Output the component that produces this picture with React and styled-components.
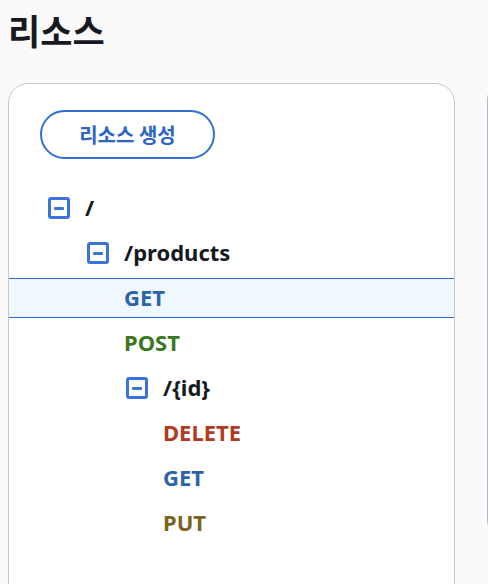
import React from "react";
import styled, { createGlobalStyle } from "styled-components";

const GlobalStyle = createGlobalStyle`
  html, body {
    margin: 0;
    padding: 0;
    background: #fafafa;
    overflow: hidden;
  }
  body {
    font-family: "Noto Sans", "Noto Sans CJK KR", sans-serif;
    color: #16191f;
  }
`;

const Page = styled.div`
  padding: 8px 0 0 8px;
  width: 800px;
`;

const Title = styled.h1`
  margin: 0;
  font-family: "Noto Sans CJK KR", "Noto Sans", sans-serif;
  font-size: 35px;
  font-weight: 700;
  line-height: 44px;
  color: #16191f;
`;

const Columns = styled.div`
  display: flex;
  align-items: flex-start;
  gap: 32px;
  margin-top: 31px;
`;

const Panel = styled.section`
  width: 445px;
  min-height: 560px;
  background: #fff;
  border: 1px solid #c6c6cd;
  border-radius: 20px;
  padding: 26px 0 0;
`;

const SidePanel = styled.div`
  width: 300px;
  height: 452px;
  background: #fafafa;
  border: 1px solid #b8b8be;
  border-radius: 16px;
`;

const Toolbar = styled.div`
  padding: 0 31px;
`;

const CreateButton = styled.button`
  width: 175px;
  height: 49px;
  border: 2.5px solid #2f6fd6;
  border-radius: 25px;
  background: #fff;
  color: #2d64c6;
  font-family: "Noto Sans CJK KR", "Noto Sans", sans-serif;
  font-size: 20px;
  font-weight: 700;
  cursor: pointer;
`;

const Tree = styled.ul`
  list-style: none;
  margin: 29px 0 0;
  padding: 0;
  display: flex;
  flex-direction: column;
  gap: 5px;
`;

const Row = styled.li`
  height: 40px;
  box-sizing: border-box;
  display: flex;
  align-items: center;
  gap: 15px;
  padding-left: ${(p) => 39 + p.$level * 39}px;
  background: ${(p) => (p.$selected ? "#f0f8ff" : "transparent")};
  border-top: 1px solid ${(p) => (p.$selected ? "#2f6fd6" : "transparent")};
  border-bottom: 1px solid ${(p) => (p.$selected ? "#2f6fd6" : "transparent")};
`;

const Toggle = styled.span`
  width: 22px;
  height: 22px;
  flex: none;
  box-sizing: border-box;
  border: 3px solid #3a74dc;
  border-radius: 3px;
  display: flex;
  align-items: center;
  justify-content: center;

  &::after {
    content: "";
    width: 10px;
    height: 3px;
    background: #3a74dc;
    border-radius: 1px;
  }
`;

const Spacer = styled.span`
  width: 22px;
  flex: none;
`;

const methodColors = {
  GET: "#2b64a8",
  POST: "#3a771f",
  DELETE: "#b23a22",
  PUT: "#7a6420",
};

const Label = styled.span`
  font-size: 22px;
  font-weight: 700;
  line-height: 1;
  margin-top: -2px;
  color: ${(p) => (p.$method ? methodColors[p.$method] : "#16191f")};
`;

const items = [
  { type: "resource", level: 0, label: "/" },
  { type: "resource", level: 1, label: "/products" },
  { type: "method", level: 1, label: "GET", selected: true },
  { type: "method", level: 1, label: "POST" },
  { type: "resource", level: 2, label: "/{id}" },
  { type: "method", level: 2, label: "DELETE" },
  { type: "method", level: 2, label: "GET" },
  { type: "method", level: 2, label: "PUT" },
];

export default function App() {
  return (
    <Page>
      <GlobalStyle />
      <Title>리소스</Title>
      <Columns>
        <Panel>
          <Toolbar>
            <CreateButton>리소스 생성</CreateButton>
          </Toolbar>
          <Tree>
            {items.map((it, i) => (
              <Row key={i} $level={it.level} $selected={it.selected}>
                {it.type === "resource" ? <Toggle /> : <Spacer />}
                <Label $method={it.type === "method" ? it.label : undefined}>
                  {it.label}
                </Label>
              </Row>
            ))}
          </Tree>
        </Panel>
        <SidePanel />
      </Columns>
    </Page>
  );
}
